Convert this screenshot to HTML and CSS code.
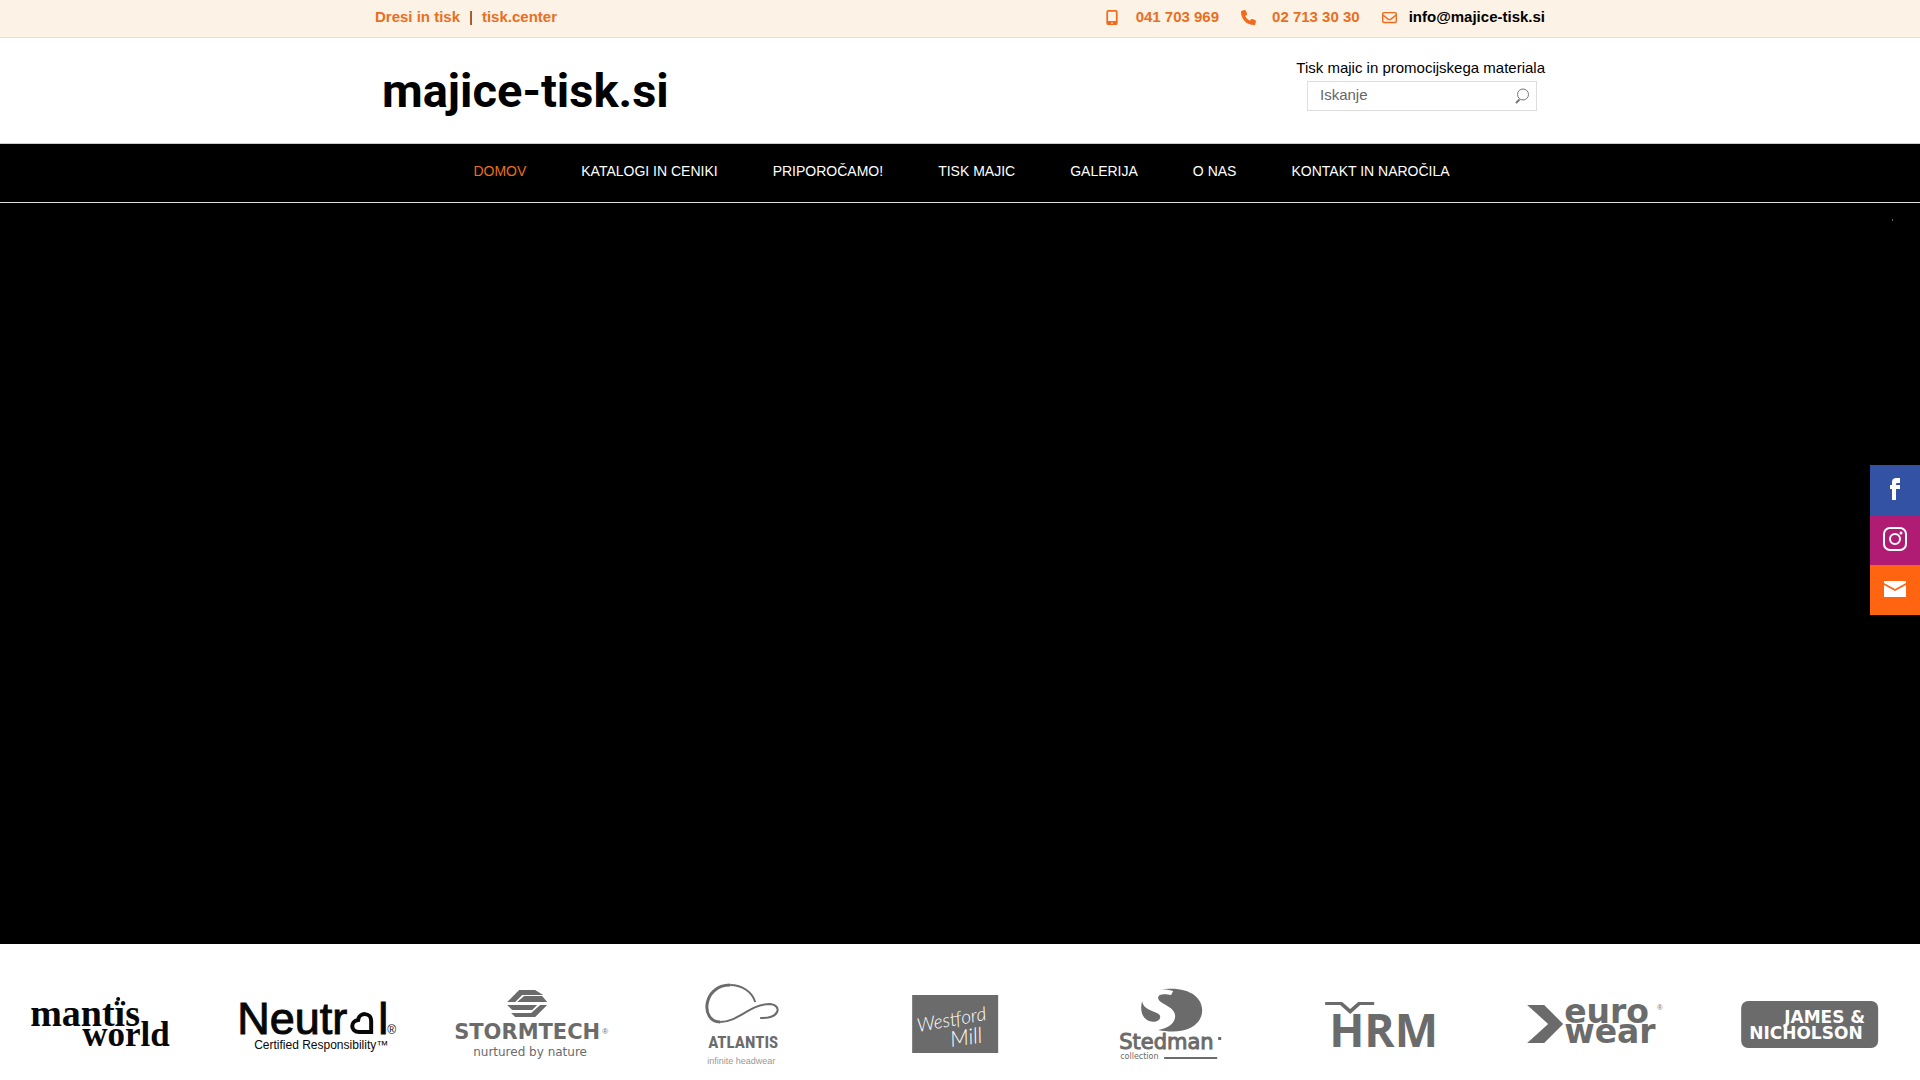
FILE: index.html
```html
<!DOCTYPE html>
<html lang="sl">
<head>
<meta charset="utf-8">
<meta name="viewport" content="width=device-width, initial-scale=1">
<title>majice-tisk.si</title>
<link rel="stylesheet" href="styles.css">
</head>
<body>
<div class="topbar">
  <div class="container topbar-row">
    <div class="sites"><a href="#">Dresi in tisk</a><span class="divider">|</span><a href="#">tisk.center</a></div>
    <div class="contacts">
      <a class="contact" href="#"><svg class="icon phone-icon" viewBox="0 0 12 16"><path fill-rule="evenodd" d="M2 0h8a2 2 0 0 1 2 2v12a2 2 0 0 1-2 2H2a2 2 0 0 1-2-2V2a2 2 0 0 1 2-2zM1.800 1.800v10h8.400v-10zM6 13a.9.9 0 1 0 0 1.800.9.900 0 0 0 0-1.800z"/></svg>041 703 969</a>
      <a class="contact" href="#"><svg class="icon" viewBox="0 0 512 512"><path d="M164.900 24.600c-7.700-18.600-28-28.500-47.400-23.200l-88 24C12.100 30.200 0 46 0 64c0 247.400 200.600 448 448 448 18 0 33.800-12.100 38.600-29.500l24-88c5.300-19.400-4.600-39.700-23.200-47.400l-96-40c-16.300-6.800-35.200-2.100-46.300 11.600L304.700 368C234.300 334.700 177.300 277.700 144 207.300L193.300 167c13.700-11.200 18.400-30 11.600-46.300l-40-96z"/></svg>02 713 30 30</a>
      <a class="contact mail" href="#"><svg class="icon" viewBox="0 0 512 512"><path d="M64 112c-8.800 0-16 7.200-16 16v22.100l172.500 141.600c20.700 17 50.400 17 71.100 0L464 150.100V128c0-8.800-7.200-16-16-16H64zM48 212.200V384c0 8.800 7.200 16 16 16h384c8.800 0 16-7.200 16-16V212.200L322 328.800c-38.400 31.500-93.700 31.500-132 0L48 212.200zM0 128c0-35.300 28.700-64 64-64h384c35.300 0 64 28.700 64 64v256c0 35.300-28.700 64-64 64H64c-35.300 0-64-28.700-64-64V128z"/></svg>info@majice-tisk.si</a>
    </div>
  </div>
</div>
<header class="header">
  <div class="container header-row">
    <a class="brand" href="#" aria-label="majice-tisk.si">
      <svg class="brand-art" viewBox="0 0 300 80"><text class="brand-text" x="7" y="49">majice-tisk.si</text></svg>
    </a>
    <div class="header-side">
      <p class="tagline">Tisk majic in promocijskega materiala</p>
      <form class="search">
        <input class="search-input" type="search" placeholder="Iskanje" aria-label="Iskanje">
        <button class="search-button" type="button" aria-label="Išči"><svg class="search-icon" viewBox="0 0 16 16"><circle cx="9" cy="6.500" r="5.500"/><path class="handle" d="M2 15l3.500-3.500"/></svg></button>
      </form>
    </div>
  </div>
</header>
<nav class="nav">
  <a class="active" href="#">DOMOV</a>
  <a href="#">KATALOGI IN CENIKI</a>
  <a href="#">PRIPOROČAMO!</a>
  <a href="#">TISK MAJIC</a>
  <a href="#">GALERIJA</a>
  <a href="#">O NAS</a>
  <a href="#">KONTAKT IN NAROČILA</a>
</nav>
<main>
  <section class="hero"></section>
  <section class="partners">
    <svg class="partner ink" viewBox="0 0 203 136"><g class="mantis"><text x="30" y="82" font-size="38">mantïs</text><text x="82" y="102" font-size="35">world</text></g><circle cx="118" cy="55" r="2"/></svg>
    <svg class="partner ink" viewBox="0 0 203 136"><g class="neutral"><text x="24" y="90" font-size="45">Neutr</text><text x="165" y="90" font-size="45">l</text></g><path class="heart" d="M158 90V77c0-9-12-9-13-1-8 1-8 12 1 12h12"/><text x="174" y="90" font-size="12">®</text><text x="41" y="105" font-size="12">Certified Responsibility™</text></svg>
    <svg class="partner" viewBox="0 0 203 136"><path d="M80 58l12-12h16l8 5H95l-7 7zM90 58l7-6h18l5 6zM80 61h30l-5 5H85zM88 73l-4-4h20l9-8h7L108 73z"/><text class="wide" x="27" y="95" font-size="21">STORMTECH</text><text x="175" y="90" font-size="8">®</text><text class="dejavu" x="46" y="112" font-size="12">nurtured by nature</text></svg>
    <svg class="partner" viewBox="0 0 203 136"><path class="loop" d="M80 78C60 78 62 41 90 41"/><path class="loop thin" d="M115 58C112 48 102 41 90 41M80 78C98 78 110 60 130 60c12 1 10 15-10 14"/><text class="atlantis" x="68" y="104" font-size="17">ATLANTIS</text><text class="light" x="67" y="120" font-size="9">infinite headwear</text></svg>
    <svg class="partner" viewBox="0 0 203 136"><path d="M59 51h86v58H59z"/><text class="script" transform="rotate(-10 65 88)" x="65" y="88" font-size="19">Westford</text><text class="script" transform="rotate(-8 98 103)" x="98" y="103" font-size="22">Mill</text></svg>
    <svg class="partner" viewBox="0 0 203 136"><path d="M91 46c28-5 44 6 44 20 0 17-19 25-44 20 12-2 17-8 17-14 0-10-17-12-17-18 0-5 8-4 13-3l2-4c-3-1-9-2-15-1zM75 57c1 11 19 10 18 16 0 4-6 6-11 4-6-2-10-10-7-20z"/><text class="dejavu stedman" x="52" y="105" font-size="21">Stedman</text><path d="M151 93h3v3h-3zM97 113h53v2H97z"/><text class="dejavu" x="53" y="115" font-size="8">collection</text></svg>
    <svg class="partner" viewBox="0 0 203 136"><path d="M45 58h17l8 7 8-7h16v3H80l-10 9-10-9H45z"/><text class="hrm" x="49" y="103" font-size="46">HRM</text></svg>
    <svg class="partner" viewBox="0 0 203 136"><path d="M34 61h17l19 19-19 19H34l21-19z"/><text class="wide" x="71" y="79" font-size="33">euro</text><text x="164" y="66" font-size="7">®</text><text class="wide" x="71" y="99" font-size="33">wear</text></svg>
    <svg class="partner" viewBox="0 0 203 136"><rect x="34" y="57" width="137" height="47" rx="7"/><g class="james"><text x="77" y="79" font-size="17">JAMES &amp;</text><text x="42" y="95" font-size="17">NICHOLSON</text></g></svg>
  </section>
</main>
<aside class="social">
  <a class="facebook" href="#" aria-label="Facebook"><svg viewBox="0 0 50 50"><path d="M30 13v5h-3c-1 0-1 1-1 2h4v4h-4v11h-4V24h-2v-4h2v-3c0-3 2-4 4-4z"/></svg></a>
  <a class="instagram" href="#" aria-label="Instagram"><svg viewBox="0 0 50 50"><g class="stroke"><rect x="14" y="13" width="22" height="22" rx="6"/><circle cx="25" cy="24" r="5"/></g><circle cx="31" cy="18" r="1.500"/></svg></a>
  <a class="email" href="#" aria-label="E-pošta"><svg viewBox="0 0 50 50"><path d="M14 16h22v2l-11 6-11-6zM14 20l11 6 11-6v12H14z"/></svg></a>
</aside>
</body>
</html>
```
FILE: styles.css
```css
* { box-sizing: border-box; }
body { margin: 0; background: #fff; color: #000; font: 15px/20px Helvetica, "Liberation Sans", Arial, sans-serif; }
a { color: inherit; text-decoration: none; }
.container { width: 100%; max-width: 1170px; margin: 0 auto; }
.topbar { background: #fdf2e6; border-bottom: 1px solid #f7dcb9; font-weight: 700; color: #e96f1f; }
.topbar-row { display: flex; justify-content: space-between; padding: 7px 0 10px; }
.divider { margin: 0 9px; color: #222; font-weight: 400; }
.contacts { display: flex; gap: 22px; }
.contact { display: flex; align-items: center; gap: 16px; }
.mail { gap: 12px; color: #000; }
.icon { width: 15px; height: 15px; fill: #f26a1b; }
.phone-icon { width: 12px; margin-right: 2px; }
.header { border-bottom: 1px solid #ccc; }
.header-row { display: flex; justify-content: space-between; padding: 20px 0 5px; }
.brand-art { display: block; width: 300px; height: 80px; }
.brand-text { font: 700 47px Roboto, sans-serif; }
.header-side { display: flex; flex-direction: column; align-items: flex-end; }
.tagline { margin: 0 0 3px; }
.search { display: flex; width: 230px; height: 30px; margin-right: 8px; border: 1px solid #ddd; }
.search-input { flex: 1; min-width: 0; padding: 0 12px 2px; border: 0; outline: 0; background: none; font: inherit; }
.search-input::placeholder { color: #666; }
.search-button { display: flex; align-items: center; padding: 0 6px; border: 0; background: none; }
.search-icon { width: 16px; height: 16px; fill: none; stroke: #777; }
.handle { stroke-width: 2; }
.nav { display: flex; flex-wrap: wrap; justify-content: center; gap: 0 55px; padding: 17px 0 21px 3px; border-bottom: 1px solid #ddd; background: #000; color: #fff; font-size: 14px; }
.active { color: #e96f1f; }
.hero { display: flex; justify-content: flex-end; height: 741px; padding: 16px 27px; background: #000; }
.hero::after { content: ""; width: 1px; height: 2px; background: #666; }
.partners { display: grid; grid-template-columns: repeat(9, 1fr); }
.partner { display: block; width: 100%; height: 136px; padding-right: 10px; fill: #6b6b6b; font-family: Helvetica, "Liberation Sans", sans-serif; }
.ink { fill: #080808; }
.mantis { font-family: "Liberation Serif", serif; font-weight: 700; }
.neutral { stroke: #080808; }
.heart { fill: none; stroke: #080808; stroke-width: 4; }
.wide, .james { font-family: "DejaVu Sans", sans-serif; font-weight: 700; }
.dejavu { font-family: "DejaVu Sans", sans-serif; }
.stedman { stroke: #6b6b6b; }
.loop { fill: none; stroke: #6b6b6b; stroke-width: 3; }
.thin { stroke-width: 2; }
.atlantis { font-family: "Liberation Sans Narrow", "Roboto Condensed", Roboto, sans-serif; font-weight: 700; }
.light { fill: #999; }
.script { fill: #fff; font-family: Lato, sans-serif; font-style: italic; font-weight: 300; }
.hrm { font-family: "Open Sans", sans-serif; font-weight: 700; }
.james { fill: #fff; }
.social { position: fixed; right: 0; top: 465px; width: 50px; }
.social a { display: block; height: 50px; }
.social svg { display: block; fill: #fff; }
.social .stroke { fill: none; stroke: #fff; stroke-width: 2; }
.facebook { background: #3352a3; }
.instagram { background: #b01c73; }
.email { background: #ff6510; }
```
